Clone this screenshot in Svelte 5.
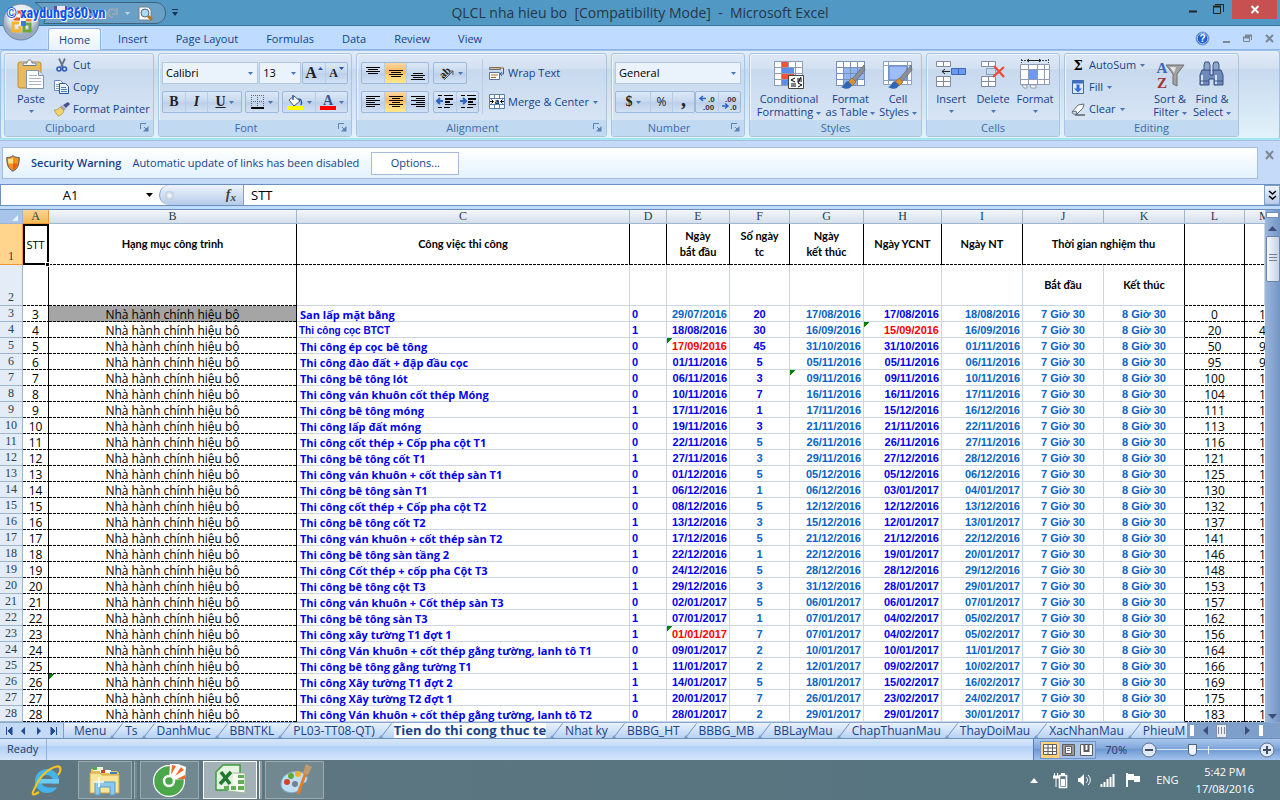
<script>
  const menuTabs = ['Home', 'Insert', 'Page Layout', 'Formulas', 'Data', 'Review', 'View'];
  const columns = [
    ['A', 26], ['B', 248], ['C', 333], ['D', 37], ['E', 63], ['F', 60], ['G', 74],
    ['H', 78], ['I', 81], ['J', 81], ['K', 81], ['L', 60], ['M', 0]
  ];
  // work, flag, start, days, end, YCNT, NT, total, next
  const source = `San lấp mặt bằng|0|29/07/2016|20|17/08/2016|17/08/2016|18/08/2016|0|1
Thi công cọc BTCT|1|18/08/2016|30|16/09/2016|15/09/2016|16/09/2016|20|4
Thi công ép cọc bê tông|0|17/09/2016|45|31/10/2016|31/10/2016|01/11/2016|50|9
Thi công đào đất + đập đầu cọc|0|01/11/2016|5|05/11/2016|05/11/2016|06/11/2016|95|9
Thi công bê tông lót|0|06/11/2016|3|09/11/2016|09/11/2016|10/11/2016|100|1
Thi công ván khuôn cốt thép Móng|0|10/11/2016|7|16/11/2016|16/11/2016|17/11/2016|104|1
Thi công bê tông móng|1|17/11/2016|1|17/11/2016|15/12/2016|16/12/2016|111|1
Thi công lấp đất móng|0|19/11/2016|3|21/11/2016|21/11/2016|22/11/2016|113|1
Thi công cốt thép + Cốp pha cột T1|0|22/11/2016|5|26/11/2016|26/11/2016|27/11/2016|116|1
Thi công bê tông cốt T1|1|27/11/2016|3|29/11/2016|27/12/2016|28/12/2016|121|1
Thi công ván khuôn + cốt thép sàn T1|0|01/12/2016|5|05/12/2016|05/12/2016|06/12/2016|125|1
Thi công bê tông sàn T1|1|06/12/2016|1|06/12/2016|03/01/2017|04/01/2017|130|1
Thi công cốt thép + Cốp pha cột T2|0|08/12/2016|5|12/12/2016|12/12/2016|13/12/2016|132|1
Thi công bê tông cốt T2|1|13/12/2016|3|15/12/2016|12/01/2017|13/01/2017|137|1
Thi công ván khuôn + cốt thép sàn T2|0|17/12/2016|5|21/12/2016|21/12/2016|22/12/2016|141|1
Thi công bê tông sàn tầng 2|1|22/12/2016|1|22/12/2016|19/01/2017|20/01/2017|146|1
Thi công Cốt thép + cốp pha Cột T3|0|24/12/2016|5|28/12/2016|28/12/2016|29/12/2016|148|1
Thi công bê tông cột T3|1|29/12/2016|3|31/12/2016|28/01/2017|29/01/2017|153|1
Thi công ván khuôn + Cốt thép sàn T3|0|02/01/2017|5|06/01/2017|06/01/2017|07/01/2017|157|1
Thi công bê tông sàn T3|1|07/01/2017|1|07/01/2017|04/02/2017|05/02/2017|162|1
Thi công xây tường T1 đợt 1|1|01/01/2017|7|07/01/2017|04/02/2017|05/02/2017|156|1
Thi công Ván khuôn + cốt thép gằng tường, lanh tô T1|0|09/01/2017|2|10/01/2017|10/01/2017|11/01/2017|164|1
Thi công bê tông gằng tường T1|1|11/01/2017|2|12/01/2017|09/02/2017|10/02/2017|166|1
Thi công Xây tường T1 đợt 2|1|14/01/2017|5|18/01/2017|15/02/2017|16/02/2017|169|1
Thi công Xây tường T2 đợt 1|1|20/01/2017|7|26/01/2017|23/02/2017|24/02/2017|175|1
Thi công Ván khuôn + cốt thép gằng tường, lanh tô T2|0|28/01/2017|2|29/01/2017|29/01/2017|30/01/2017|183|1`;
  const rows = source.split('\n').map((line, i) => [i + 3, ...line.split('|')]);
  const sheets = ['Menu', 'Ts', 'DanhMuc', 'BBNTKL', 'PL03-TT08-QT)', 'Tien do thi cong thuc te', 'Nhat ky', 'BBBG_HT', 'BBBG_MB', 'BBLayMau', 'ChapThuanMau', 'ThayDoiMau', 'XacNhanMau', 'PhieuM'];
  let activeTab = $state('Home');
  let activeSheet = $state('Tien do thi cong thuc te');
  let zoom = $state(33);
  let cellRef = $state('A1');
  let formula = $state('STT');
</script>

{#snippet arrow()}<svg class="arr" width="5" height="3" viewBox="0 0 5 3"><path d="M0 0h5L2.500 3z" fill="#4a76b8" /></svg>{/snippet}
{#snippet launcher(name)}
  <button class="launch" aria-label={`${name} settings`}><svg width="9" height="9" viewBox="0 0 9 9"><path d="M.5 6V.5H6M4 4l3 3" fill="none" stroke="#5a82b5" /><path d="M8.500 3v5.500H3z" fill="#5a82b5" /></svg></button>
{/snippet}
{#snippet lines(list)}
  <svg width="16" height="16" viewBox="0 0 16 16" shape-rendering="crispEdges">
    {#each list as l}<rect x={l[0]} y={l[1]} width={l[2]} height="1" fill="#000" />{/each}
  </svg>
{/snippet}
{#snippet brush()}
  <path d="M29 5 17 19l3 3L30 10z" fill="#8b8f98" stroke="#5c606a" stroke-width=".6" />
  <path d="m17 18 4 4-4 4-4-4z" fill="#d9902f" stroke="#8a5a1c" stroke-width=".6" />
  <path d="M13 21c-4 1-3 5-7 6 5 3 10 2 11-2z" fill="#2f66b8" />
{/snippet}
{#snippet gridLines(color)}
  <rect x="1.500" y="1.500" width="28" height="24" fill="#fff" stroke={color} />
  <path d="M1 7.500h28M1 13.500h28M1 19.500h28M8.500 1v24M15.500 1v24M22.500 1v24" stroke={color} fill="none" />
{/snippet}

<div class="window">
  <header class="title">
    <h1>QLCL nha hieu bo &nbsp;[Compatibility Mode]&nbsp; - &nbsp;Microsoft Excel</h1>
    <div class="quick">
      <svg width="152" height="26" viewBox="0 0 152 26">
        <path d="M7 2.500h120c14 0 14 21 0 21H16C19 13 13 6 7 2.500z" fill="#6aa0c6" stroke="#3f6179" />
        <path d="M26 6h13v13H26z" fill="#5b50a8" /><path d="M29 6h8v5h-8zM29 14h7v5h-7z" fill="#e8e8f8" />
        <path d="M54 14c-1-6 8-7 9-1M54 8v6h5" fill="none" stroke="#2b56b5" stroke-width="2" />
        <path d="M89 14c1-5-7-7-9-1 0 3 3 4 5 4M89 8v6h-5" fill="none" stroke="#95a9bd" stroke-width="2" />
        <path d="M97 12h5l-2.500 3z" fill="#c5d5e3" />
        <path d="M111 7h9l3 3v10h-12z" fill="#fff" stroke="#73808e" /><circle cx="117" cy="13" r="4" fill="#a9dafa" stroke="#59656f" /><path d="m120 16 4 4" stroke="#b8731b" stroke-width="3" />
        <path d="M144 9.500h6" stroke="#1d3556" /><path d="M144 12h6l-3 4z" fill="#1d3556" />
      </svg>
    </div>
    <button class="orb" aria-label="Office button">
      <svg width="38" height="38" viewBox="0 0 38 38">
        <defs><radialGradient id="orb" cx=".5" cy=".35"><stop offset="0" stop-color="#fff" /><stop offset=".65" stop-color="#e4e8ef" /><stop offset="1" stop-color="#9aaac0" /></radialGradient></defs>
        <circle cx="19" cy="19" r="18" fill="url(#orb)" stroke="#6a86a5" />
        <g fill="none" stroke-width="3">
          <path d="M18 16h-5v-4l3-3h4v5" stroke="#e8501f" /><path d="M22 16v-6h6v7h-4" stroke="#f0822c" />
          <path d="M17 20h-6v8h7v-5" stroke="#f6b62b" /><path d="M22 22v6h6v-7h-5" stroke="#6ca63a" />
        </g>
        <path d="M19 18h5v5h-5z" fill="#3b7bd0" />
      </svg>
    </button>
    <span class="mark">© xaydung360.vn</span>
    <div class="winctl">
      <button aria-label="Minimize"><svg width="30" height="19"><path d="M11 11.500h8" stroke="#222" stroke-width="2" /></svg></button>
      <button aria-label="Restore"><svg width="30" height="19"><path d="M9.500 6.500h7v7h-7zM11 4.500h8.500V12" fill="none" stroke="#222" /><path d="M9 6.500h8" stroke="#222" stroke-width="2" /></svg></button>
      <button class="close" aria-label="Close"><svg width="45" height="19"><path d="m19.500 6 7 7m0-7-7 7" stroke="#fff" stroke-width="2" /></svg></button>
    </div>
  </header>

  <nav class="tabs">
    {#each menuTabs as t}
      <button class:on={t === activeTab} onclick={() => (activeTab = t)}>{t}</button>
    {/each}
    <div class="docctl">
      <button aria-label="Help"><svg width="15" height="15" viewBox="0 0 15 15"><circle cx="7.500" cy="7.500" r="6.500" fill="#1f5fd2" stroke="#7f9cc8" /><circle cx="7.500" cy="7.500" r="5.300" fill="none" stroke="#cfe2ff" stroke-width=".8" /><text x="7.500" y="11" text-anchor="middle" class="q">?</text></svg></button>
      <button aria-label="Minimize document"><svg width="9" height="15"><path d="M1 11h7" stroke="#7d8794" stroke-width="2" /></svg></button>
      <button aria-label="Restore document"><svg width="10" height="15"><path d="M.5 6.500h6v4h-6zM2.500 4.500h6V9" fill="none" stroke="#7d8794" /><path d="M0 6.500h7M2 4.500h7" stroke="#7d8794" stroke-width="2" /></svg></button>
      <button aria-label="Close document"><svg width="10" height="15"><path d="m1 4 7 7m0-7-7 7" stroke="#7d8794" stroke-width="2" /></svg></button>
    </div>
  </nav>

  <div class="ribbon">
    <section class="grp clip">
      <div class="body">
        <button class="big paste">
          <svg width="28" height="32" viewBox="0 0 28 32"><rect x="1" y="3" width="23" height="26" rx="2" fill="#e9b95b" stroke="#c08c34" /><path d="M5 3h15v4H5z" fill="#c9ccd2" /><path d="M6 6.500V4h4c0-4 5-4 5 0h4v2.500z" fill="#f4f5f7" stroke="#70767f" /><path d="M9.500 11.500h12l5 5v13h-17z" fill="#fff" stroke="#7e93ad" /><path d="M12 16.500h8M12 19.500h12M12 22.500h12M12 25.500h12" stroke="#a9b4c5" /><path d="M21.500 11.500v5h5" fill="#dbe4f0" stroke="#7e93ad" /></svg>
          <span>Paste</span>{@render arrow()}
        </button>
        <div class="col">
          <button class="sm"><svg width="16" height="16" viewBox="0 0 16 16"><path d="M5 1.500 9 10M11 1.500 7 10" stroke="#66758c" stroke-width="1.800" /><circle cx="5" cy="12" r="2" fill="none" stroke="#2d5bb4" stroke-width="1.600" /><circle cx="10.500" cy="12" r="2" fill="none" stroke="#2d5bb4" stroke-width="1.600" /></svg>Cut</button>
          <button class="sm"><svg width="16" height="16" viewBox="0 0 16 16"><path d="M.5 1.500h6l3 3v7h-9z" fill="#fff" stroke="#6886b4" /><path d="M2 5.500h4M2 7.500h4M2 9.500h4" stroke="#7c9ad0" /><path d="M5.500 4.500h6l3 3v7h-9z" fill="#eaf1fc" stroke="#31559c" /><path d="M7 8.500h5M7 10.500h6M7 12.500h6" stroke="#4e78bf" /></svg>Copy</button>
          <button class="sm"><svg width="16" height="16" viewBox="0 0 16 16"><path d="M14 1 16 3l-4 4-3-3z" fill="#4c4f8c" /><path d="m8 4 4 4-2 1.500L6 6z" fill="#a4a8b8" /><path d="M6 6l4 4c-1 3-4 5-6 5L0 9c3 0 5-1 6-3z" fill="#f1d36e" stroke="#a8842c" stroke-width=".6" /></svg>Format Painter</button>
        </div>
      </div>
      <footer>Clipboard{@render launcher('Clipboard')}</footer>
    </section>

    <section class="grp font">
      <div class="body stack">
        <div class="row">
          <label class="pick w97"><select aria-label="Font name"><option>Calibri</option></select>{@render arrow()}</label>
          <label class="pick w42"><select aria-label="Font size"><option>13</option></select>{@render arrow()}</label>
          <div class="set push">
            <button class="b22" aria-label="Grow font"><b class="ser s16">A</b><svg width="5" height="12"><path d="M0 4h5L2.500 1z" fill="#2b52a5" /></svg></button>
            <button class="b22" aria-label="Shrink font"><b class="ser s12">A</b><svg width="5" height="12"><path d="M0 1h5L2.500 4z" fill="#2b52a5" /></svg></button>
          </div>
        </div>
        <div class="row">
          <div class="set">
            <button class="b22" aria-label="Bold"><b class="ser s14">B</b></button>
            <button class="b22" aria-label="Italic"><b class="ser s14"><i>I</i></b></button>
            <button class="b34" aria-label="Underline"><b class="ser s14"><u>U</u></b>{@render arrow()}</button>
          </div>
          <div class="set push"><button class="b32" aria-label="Borders"><svg width="14" height="14"><path d="M.5 0v12M6.500 0v12M12.500 0v12M0 .5h13M0 6.500h13" stroke="#666" stroke-dasharray="1 1" /><path d="M0 13h13" stroke="#000" stroke-width="2" /></svg>{@render arrow()}</button></div>
          <div class="set push">
            <button class="b32" aria-label="Fill color"><svg width="18" height="16"><path d="m3 6 5-4 6 5-6 5z" fill="#fff" stroke="#44546a" /><path d="M7 1v5M12 5c4 0 4 3 3 6" fill="none" stroke="#2c5aa8" stroke-width="1.500" /><path d="M1 12h16v4H1z" fill="#ff0" /></svg>{@render arrow()}</button>
            <button class="b32" aria-label="Font color"><svg width="16" height="16"><text x="8" y="11" text-anchor="middle" class="fc">A</text><path d="M0 12h16v4H0z" fill="red" /></svg>{@render arrow()}</button>
          </div>
        </div>
      </div>
      <footer>Font{@render launcher('Font')}</footer>
    </section>

    <section class="grp align">
      <div class="body">
        <div class="stack">
          <div class="row">
            <div class="set">
              <button class="b22" aria-label="Top align">{@render lines([[1, 2, 14], [3, 4, 10], [1, 6, 14], [3, 8, 10]])}</button>
              <button class="b22 hot" aria-label="Middle align">{@render lines([[1, 5, 14], [3, 7, 10], [1, 9, 14], [3, 11, 10]])}</button>
              <button class="b22" aria-label="Bottom align">{@render lines([[3, 8, 10], [1, 10, 14], [3, 12, 10], [1, 14, 14]])}</button>
            </div>
            <div class="set push"><button class="b32" aria-label="Orientation"><svg width="17" height="16"><text x="1" y="12" class="ori" transform="rotate(-45 6 8)">ab</text><path d="M6 15 15 6M15 10V6h-4" fill="none" stroke="#555" /></svg>{@render arrow()}</button></div>
          </div>
          <div class="row">
            <div class="set">
              <button class="b22" aria-label="Align left">{@render lines([[1, 2, 14], [1, 4, 9], [1, 6, 14], [1, 8, 9], [1, 10, 14], [1, 12, 9]])}</button>
              <button class="b22 hot" aria-label="Center">{@render lines([[1, 2, 14], [4, 4, 8], [1, 6, 14], [4, 8, 8], [1, 10, 14], [4, 12, 8]])}</button>
              <button class="b22" aria-label="Align right">{@render lines([[1, 2, 14], [6, 4, 9], [1, 6, 14], [6, 8, 9], [1, 10, 14], [6, 12, 9]])}</button>
            </div>
            <div class="set push">
              <button class="b22" aria-label="Decrease indent"><svg width="16" height="16"><path d="M1 1.500h4M7 1.500h9M8 4.500h8M8 7.500h5M8 10.500h8M1 13.500h4M7 13.500h6" stroke="#000" /><path d="M8 5.500h8M8 8.500h5" stroke="#000" /><path d="M0 7h6M3 4 0 7l3 3" fill="none" stroke="#2b63c6" stroke-width="2" /></svg></button>
              <button class="b22" aria-label="Increase indent"><svg width="16" height="16"><path d="M1 1.500h4M7 1.500h9M8 4.500h8M8 7.500h5M8 10.500h8M1 13.500h4M7 13.500h6" stroke="#000" /><path d="M8 5.500h8M8 8.500h5" stroke="#000" /><path d="M0 7h6M3 4l3 3-3 3" fill="none" stroke="#2b63c6" stroke-width="2" /></svg></button>
            </div>
          </div>
        </div>
        <div class="stack wrap">
          <button class="sm"><svg width="16" height="16"><path d="M.5 2.500h11v2H.5zM.5 7.500h10v7H.5z" fill="#fff" stroke="#5a7396" /><path d="M1 3h14M2 10h7M2 12.500h5" stroke="#b06a20" /><path d="M14.500 3v6h-3M13 7l-2 2 2 2" fill="none" stroke="#44608c" /></svg>Wrap Text</button>
          <button class="sm"><svg width="16" height="16"><path d="M.5.500h15v14H.5zM.5 4.500h15M.5 10.500h15M5.500.500v4M10.500.500v4M5.500 10.500v4M10.500 10.500v4" fill="#fff" stroke="#5a7fb5" /><path d="M1 7.500h3M2.500 5.500 4.500 7.500 2.500 9.500M15 7.500h-3M13.500 5.500l-2 2 2 2" fill="none" stroke="#000" /><text x="8" y="10" text-anchor="middle" class="ma">a</text></svg>Merge &amp; Center {@render arrow()}</button>
        </div>
      </div>
      <footer>Alignment{@render launcher('Alignment')}</footer>
    </section>

    <section class="grp num">
      <div class="body stack">
        <div class="row"><label class="pick full"><select aria-label="Number format"><option>General</option></select>{@render arrow()}</label></div>
        <div class="row">
          <div class="set">
            <button class="b34" aria-label="Currency"><b class="ser s14">$</b>{@render arrow()}</button>
            <button class="b22" aria-label="Percent"><span class="pc">%</span></button>
            <button class="b22" aria-label="Comma"><b class="ser s20 up">,</b></button>
          </div>
          <div class="set push">
            <button class="b22" aria-label="Increase decimal"><svg width="17" height="15"><path d="M1 3.500h6M4 1 1 3.500 4 6" fill="none" stroke="#2b63c6" stroke-width="1.500" /><text x="9" y="7" class="dec">.0</text><text x="4" y="15" class="dec">.00</text></svg></button>
            <button class="b22" aria-label="Decrease decimal"><svg width="17" height="15"><text x="4" y="7" class="dec">.00</text><path d="M1 11h6M4 8.500 7 11l-3 2.500" fill="none" stroke="#2b63c6" stroke-width="1.500" /><text x="9" y="15" class="dec">.0</text></svg></button>
          </div>
        </div>
      </div>
      <footer>Number{@render launcher('Number')}</footer>
    </section>

    <section class="grp styles">
      <div class="body">
        <button class="big g70"><svg width="32" height="30" viewBox="0 0 32 30">{@render gridLines('#8f9bb5')}<path d="M9 2h6v5H9zM9 14h12v5H9z" fill="#f4523b" /><path d="M9 8h12v5H9zM9 20h6v5H9z" fill="#5d8cf0" /><path d="M15.500 15.500h15v13h-15z" fill="#fff" stroke="#444" /><path d="m22 18-4 2 4 2M18 24h5M18 26h5M24 19h5M24 21h5M28 17l-3 6M25 23l4 2-4 2" fill="none" stroke="#000" /></svg>
          <span>Conditional<br />Formatting {@render arrow()}</span></button>
        <button class="big g53"><svg width="32" height="30" viewBox="0 0 32 30">{@render gridLines('#7890b8')}<path d="M9 8h6v5H9zM16 8h6v5h-6zM23 8h6v5h-6zM9 14h6v5H9zM16 14h6v5h-6zM23 14h6v5h-6zM9 20h6v5H9zM16 20h6v5h-6z" fill="#92b4f5" />{@render brush()}</svg>
          <span>Format<br />as Table {@render arrow()}</span></button>
        <button class="big g44"><svg width="32" height="30" viewBox="0 0 32 30"><path d="M1.500 1.500h28v23h-28zM1 5.500h28M1 20.500h28M6.500 1v23M25.500 1v23" fill="#fff" stroke="#8fa0ba" /><path d="M7 6h18v14H7z" fill="#9dbcf8" stroke="#5d83cc" />{@render brush()}</svg>
          <span>Cell<br />Styles {@render arrow()}</span></button>
      </div>
      <footer>Styles</footer>
    </section>

    <section class="grp cells">
      <div class="body">
        <button class="big g42"><svg width="32" height="30" viewBox="0 0 32 30"><path d="M1.500 1.500h14v5h-14zM8.500 1.500v5M1.500 16.500h14v10h-14zM1.500 21.500h14M8.500 16.500v10" fill="#fff" stroke="#7f8ba3" /><path d="M16.500 8.500h14v6h-14z" fill="#6d9af0" stroke="#3f66b4" /><path d="M23.500 9v5" stroke="#3f66b4" /><path d="M7 11.500h8M10 9l-3 2.500 3 2.500" fill="none" stroke="#222" /></svg><span>Insert</span>{@render arrow()}</button>
        <button class="big g42"><svg width="32" height="30" viewBox="0 0 32 30"><path d="M4.500 1.500h14v5h-14zM11.500 1.500v5M4.500 16.500h14v10h-14zM4.500 21.500h14M11.500 16.500v10" fill="#fff" stroke="#7f8ba3" /><path d="M9.500 8.500h9v6h-9z" fill="none" stroke="#3f66b4" stroke-dasharray="1 1" /><path d="m17 6 10 11M27 7 16 17" stroke="#f04a32" stroke-width="2.200" /></svg><span>Delete</span>{@render arrow()}</button>
        <button class="big g42"><svg width="32" height="32" viewBox="0 0 32 32"><path d="M2 1.500h28M2.500 0v4M29.500 0v4" stroke="#444" stroke-dasharray="2 1" /><path d="M8 1.500h14M10 0 8 1.500 10 3M20 0l2 1.500L20 3" fill="none" stroke="#222" /><path d="M1.500 5.500h29v20h-29zM1.500 10.500h29M1.500 20.500h29M9.500 5.500v20M18.500 5.500v20M25.500 5.500v20" fill="#fff" stroke="#8f9bb5" /><path d="M10 11h8v9h-8z" fill="#6d9af0" /><path d="M3 26h5v3H5zM11 26h6v3h-5z" fill="#fff" stroke="#8f9bb5" /></svg><span>Format</span>{@render arrow()}</button>
      </div>
      <footer>Cells</footer>
    </section>

    <section class="grp edit">
      <div class="body">
        <div class="col">
          <button class="sm"><svg width="14" height="16"><text x="7" y="13" text-anchor="middle" class="sum">Σ</text></svg>AutoSum {@render arrow()}</button>
          <button class="sm"><svg width="14" height="16"><path d="M1.500 1.500h11v13h-11z" fill="#dce9fb" stroke="#47689c" /><path d="M1.500 1.500h11v3h-11z" fill="#3f6ec2" /><path d="M5.500 5.500h3v4H11l-4 4-4-4h2.500z" fill="#2f6ee0" /></svg>Fill {@render arrow()}</button>
          <button class="sm"><svg width="14" height="16"><path d="m1 11 6-7 6-1-1 4-6 6H2z" fill="#fff" stroke="#66707f" /><path d="m1 11 4-1 1 3" fill="#cfd6e2" stroke="#66707f" /><path d="M4 14h10" stroke="#222" /></svg>Clear {@render arrow()}</button>
        </div>
        <button class="big g42"><svg width="32" height="30" viewBox="0 0 32 30"><path d="M12 5h18l-7 9v12l-4-2V14z" fill="#a3a3a3" stroke="#6e6e6e" /><path d="M16 7h6l-2 6z" fill="#e3e3e3" /><text x="8" y="13" text-anchor="middle" class="az" fill="#3a65b4">A</text><text x="8" y="28" text-anchor="middle" class="az" fill="#a03232">Z</text></svg><span>Sort &amp;<br />Filter {@render arrow()}</span></button>
        <button class="big g42"><svg width="32" height="30" viewBox="0 0 32 30"><path d="M9 2h4l1 3v6H8V5zM18 2h4l1 3v6h-6V5z" fill="#8ea5cc" stroke="#3c5484" /><path d="M6 10h8v5h3v-5h8l2 5v10h-9v-6h-5v6H4V15z" fill="#6f8bbb" stroke="#344c7c" /><path d="M6 15v9M20 15v9" stroke="#d6e2f6" stroke-width="2" /><path d="M4 21h9M18 21h9" stroke="#3c5484" /></svg><span>Find &amp;<br />Select {@render arrow()}</span></button>
      </div>
      <footer>Editing</footer>
    </section>
  </div>

  <div class="message">
    <div class="msg">
      <svg width="14" height="17" viewBox="0 0 14 17"><path d="M7 .7C9 2.300 11 2.500 13.200 2.500c0 7-1.200 11-6.200 13.700C2 13.500.8 9.500.8 2.500 3 2.500 5 2.300 7 .7z" fill="#f7901e" stroke="#4d5560" /><path d="M7 2.500v6H2.500C2 7 2 5.500 2 4c2 0 3.500-.5 5-1.500z" fill="#ffe08a" /><path d="M7 8.500h4.500C11 11.500 9.500 13.500 7 15z" fill="#ee5a12" /></svg>
      <strong>Security Warning</strong><span>Automatic update of links has been disabled</span>
      <button>Options...</button>
    </div>
    <button class="x" aria-label="Close message bar"><svg width="10" height="10"><path d="m1 1 7 8m0-8-7 8" stroke="#7d8794" stroke-width="2" /></svg></button>
  </div>

  <div class="fbar">
    <div class="name"><input aria-label="Name box" bind:value={cellRef} /><svg width="7" height="4"><path d="M0 0h7L3.500 4z" /></svg></div>
    <div class="fx"><i class="dot"></i><button aria-label="Insert function"><i>f</i><small>x</small></button></div>
    <input class="formula" aria-label="Formula" bind:value={formula} />
    <button class="exp" aria-label="Expand formula bar"><svg width="9" height="11"><path d="m1 1 3.500 3L8 1M1 6l3.500 3L8 6" fill="none" stroke="#000" stroke-width="1.500" /></svg></button>
  </div>

  <main>
    <div class="sheet">
      <table>
        <colgroup><col style="width:23px" />{#each columns as c}<col style={c[1] ? `width:${c[1]}px` : ''} />{/each}</colgroup>
        <thead><tr><th class="corner"><svg width="7" height="7"><path d="M6 0v6H0z" fill="#e9f1fc" /></svg></th>{#each columns as c, i}<th class:sel={i === 0} class:last={i === 12}>{c[0]}</th>{/each}</tr></thead>
        <tbody>
          <tr class="h1">
            <th class="rh sel">1</th>
            <td class="k active">STT<i class="knob"></i></td><td class="k d">Hạng mục công trình</td><td class="k d">Công việc thi công</td><td class="k d"></td>
            <td class="k d">Ngày<br />bắt đầu</td><td class="k d">Số ngày<br />tc</td><td class="k d">Ngày<br />kết thúc</td><td class="k d">Ngày YCNT</td><td class="k d">Ngày NT</td>
            <td class="k d" colspan="2">Thời gian nghiệm thu</td><td class="k d"></td><td class="d"></td>
          </tr>
          <tr class="h2">
            <th class="rh">2</th><td class="k d"></td><td class="k d"></td><td></td><td></td><td></td><td></td><td></td><td></td><td></td>
            <td>Bắt đầu</td><td class="k">Kết thúc</td><td class="k d"></td><td class="d"></td>
          </tr>
          {#each rows as r}
            <tr>
              <th class="rh">{r[0]}</th>
              <td class="k d n">{r[0]}</td>
              <td class="k d n" class:gray={r[0] === 3} class:flag={r[0] === 26}>Nhà hành chính hiệu bộ</td>
              <td class="work" class:thin={r[0] === 4}>{r[1]}</td>
              <td class="ar l">{r[2]}</td>
              <td class="ar r" class:lt={r[0] === 3} class:red={r[0] === 5 || r[0] === 23} class:flag={r[0] === 5 || r[0] === 23}>{r[3]}</td>
              <td class="ar" class:lt={r[0] > 10}>{r[4]}</td>
              <td class="ar r lt" class:flag={r[0] === 7}>{r[5]}</td>
              <td class="ar r" class:red={r[0] === 4} class:flag={r[0] === 4}>{r[6]}</td>
              <td class="ar r lt">{r[7]}</td>
              <td class="ar lt">7 Giờ 30</td>
              <td class="ar lt k">8 Giờ 30</td>
              <td class="k d n">{r[8]}</td>
              <td class="d n last">{r[9]}</td>
            </tr>
          {/each}
        </tbody>
      </table>
    </div>
    <div class="vscroll">
      <i class="split"></i>
      <svg width="9" height="5"><path d="M0 5h9L4.500 0z" fill="#3d4f78" /></svg>
      <i class="thumb"></i>
      <svg class="end" width="9" height="5"><path d="M0 0h9L4.500 5z" fill="#3d4f78" /></svg>
    </div>
  </main>

  <div class="sheets">
    <div class="nav">
      <button aria-label="First sheet"><svg width="8" height="8"><path d="M1.500 0v8M7 0v8L3 4z" fill="#1f4a94" stroke="#1f4a94" stroke-width="1" /></svg></button>
      <button aria-label="Previous sheet"><svg width="8" height="8"><path d="M5 0v8L1 4z" fill="#1f4a94" /></svg></button>
      <button aria-label="Next sheet"><svg width="8" height="8"><path d="M2 0v8l4-4z" fill="#1f4a94" /></svg></button>
      <button aria-label="Last sheet"><svg width="8" height="8"><path d="M6.500 0v8M1 0v8l4-4z" fill="#1f4a94" stroke="#1f4a94" stroke-width="1" /></svg></button>
    </div>
    <div class="strip">
      {#each sheets as s}
        <button class:on={s === activeSheet} onclick={() => (activeSheet = s)}>{s}</button>
        <svg class="slash" width="14" height="16"><path d="M0 15.500h2L13.500.500" fill="none" stroke="#6f94c6" /><path d="m0 16 3-4 3 4z" fill="#7b9ccb" /></svg>
      {/each}
    </div>
    <div class="hscroll">
      <i class="grip"></i><svg width="5" height="9"><path d="M5 0v9L0 4.500z" fill="#3d4f78" /></svg><i class="hthumb"></i><svg class="end" width="5" height="9"><path d="M0 0v9l5-4.500z" fill="#3d4f78" /></svg><i class="grip"></i>
    </div>
  </div>

  <div class="status">
    <span class="ready">Ready</span>
    <div class="views">
      <div class="modes">
        <button class="hot" aria-label="Normal view"><svg width="14" height="12"><path d="M.5.500h13v10H.5zM0 4h13M0 7.500h13M5 0v11M9.500 0v11" fill="#fff" stroke="#5d5d5d" /></svg></button>
        <button aria-label="Page layout view"><svg width="13" height="12"><path d="M.5.500h12v11H.5z" fill="#999" stroke="#5d5d5d" /><path d="M3.500 2.500h6v7h-6z" fill="#fff" stroke="#5d5d5d" /><path d="M5 4.500h3M5 6.500h3" stroke="#777" /></svg></button>
        <button aria-label="Page break view"><svg width="13" height="12"><path d="M.5.500h12v11H.5z" fill="#fff" stroke="#5d5d5d" /><path d="M4.500 0v7h4V0" fill="none" stroke="#5d5d5d" stroke-width="2" /></svg></button>
      </div>
      <span class="pct">70%</span>
      <button aria-label="Zoom out"><svg width="16" height="16"><circle cx="8" cy="8" r="7" fill="#dfe9f7" stroke="#5b6f8c" /><path d="M4 8h8" stroke="#444e5e" stroke-width="2" /></svg></button>
      <input type="range" aria-label="Zoom" min="0" max="100" bind:value={zoom} />
      <button aria-label="Zoom in"><svg width="16" height="16"><circle cx="8" cy="8" r="7" fill="#dfe9f7" stroke="#5b6f8c" /><path d="M4 8h8M8 4v8" stroke="#444e5e" stroke-width="2" /></svg></button>
    </div>
  </div>

  <div class="task">
    <button class="plain" aria-label="Internet Explorer"><svg width="32" height="32" viewBox="0 0 32 32"><circle cx="17" cy="17" r="9" fill="none" stroke="#45b4ea" stroke-width="6" /><path d="M17 19.500h13v4H17z" fill="#5d7680" /><path d="M9 15h20v4.500H9z" fill="#6ccbf5" /><path d="M6 22c-6 10-3 10 3 6M4.500 25C9 12 19 4 27 2.500c5-.5 4 5 1 8.500" fill="none" stroke="#f6c321" stroke-width="2.200" /></svg></button>
    <button class="app two" aria-label="File Explorer"><svg width="34" height="32" viewBox="0 0 34 32"><path d="M3 5h5l1 2h20l2 2v16H3z" fill="#e9c25c" /><path d="M5 3h10v4H5z" fill="#f7f3dd" /><path d="M5 3h4v3H5z" fill="#4dae50" /><path d="M12 6h11v3H12z" fill="#fff" /><path d="M13 6h4v3h-4z" fill="#d7402f" /><path d="M22 8h7v2h-7z" fill="#3c82c8" /><path d="M2 9h10l2 2h17v18H2z" fill="#fbe59a" stroke="#cfa543" /><path d="M7 31V18h20v13h-5v-8H12v8z" fill="#8cc7ec" stroke="#579ccb" /><path d="M11 13v10M6 18h10" stroke="#fff" stroke-width="1.500" /></svg></button>
    <button class="app" aria-label="Browser"><svg width="34" height="32" viewBox="0 0 34 32"><circle cx="16" cy="17" r="10.500" fill="none" stroke="#fff" stroke-width="11" /><circle cx="16" cy="17" r="10.500" fill="none" stroke="#4aa84a" stroke-width="8.500" /><path d="M16 16 17 0h8l8 3-1 12z" fill="#fff" /><path d="m18 11 1-10 4 1zM22 12l6-9 3 3zM24 15l8-4v4z" fill="#f26a2a" /><circle cx="16" cy="17" r="4.500" fill="#4aa84a" stroke="#fff" stroke-width="1.500" /></svg></button>
    <button class="app two lit" aria-label="Excel"><svg width="32" height="32" viewBox="0 0 32 32"><path d="M9 1h17v25H2V8z" fill="#e9f5e4" stroke="#3f9b3a" stroke-width="1.500" /><path d="M14 9h17v20l-17-2z" fill="#f5faf2" stroke="#9db793" /><path d="M24 11h6v3h-6zM24 16h6v4h-6zM24 22h6v4h-6zM17 22h5v4h-5zM10 22h5v4h-5z" fill="#66ad58" /><path d="M4 7h15v14H4z" fill="#dff0d9" /><path d="m7 8 9 12M17 8 6 20" stroke="#1f7a30" stroke-width="3.500" /></svg></button>
    <button class="app" aria-label="Paint"><svg width="34" height="32" viewBox="0 0 34 32"><path d="M3 20C3 10 16 5 25 9c6 3 5 9 1 10s-3 3-4 6c-4 6-19 5-19-5z" fill="#bfe0f3" stroke="#7fa9c5" /><circle cx="9" cy="18" r="3" fill="#d5432f" /><circle cx="13" cy="12" r="3" fill="#61a83c" /><circle cx="20" cy="10" r="3" fill="#f3b12a" /><circle cx="17" cy="20" r="3" fill="#6a8494" /><path d="m28 8-8 22" stroke="#e17c28" stroke-width="3" /><path d="m25 9 3-9 6 3-4 8z" fill="#c19a6c" /></svg></button>
    <div class="tray">
      <svg width="8" height="5"><path d="M0 5h8L4 0z" fill="#fff" /></svg>
      <svg width="16" height="16"><path d="M7.500 3.500h7v12h-7z" fill="none" stroke="#fff" stroke-width="1.600" /><path d="M9 1h4v2H9zM9 7h4v7H9z" fill="#fff" /><path d="M2.500 1v3M5.500 1v3M4 6v9" stroke="#fff" /><path d="M1 3.500h6v3H1z" fill="#fff" /></svg>
      <svg width="14" height="14"><path d="M1 5h2l4-4v12L3 9H1z" fill="#fff" /><path d="M9 4c2 2 2 4 0 6M11 2c3 3 3 7 0 10" fill="none" stroke="#fff" /></svg>
      <svg width="16" height="14"><path d="M1.500 14v-3M4.500 14v-5M7.500 14V6M10.500 14V4M13.500 14V1" stroke="#fff" stroke-width="2" /></svg>
      <svg width="16" height="16"><path d="M2 1v14" stroke="#fff" stroke-width="2" /><path d="M3 2h6v2h6v6H9V8H3z" fill="#fff" /></svg>
      <span>ENG</span>
      <time>5:42 PM<br />17/08/2016</time>
    </div>
  </div>
</div>

<style>
  :global(body) { margin: 0; }
  * { box-sizing: border-box; }
  .window { display: flex; flex-direction: column; height: 100vh; overflow: hidden; font: 11px/16px "Open Sans", "Noto Sans", sans-serif; color: #15428b; background: #bfdbff; }
  button, input, select { font: inherit; color: inherit; border: 0; padding: 0; margin: 0; background: none; border-radius: 0; outline: 0; }
  button { display: flex; align-items: center; justify-content: center; white-space: nowrap; flex: none; }
  svg { display: block; flex: none; overflow: visible; }

  .title { position: relative; height: 26px; flex: none; background: #5199c4; border-bottom: 1px solid #3d7399; display: flex; align-items: center; justify-content: center; z-index: 2; }
  h1 { margin: 0; font-size: 14px; line-height: 24px; font-weight: 400; color: #263645; white-space: nowrap; }
  .quick { position: absolute; left: 28px; top: 0; }
  .orb { position: absolute; left: 2px; top: 3px; }
  .mark { position: absolute; left: 6px; top: 4px; font: bold 14px/18px "Liberation Sans Narrow", "Roboto Condensed", "DejaVu Sans Condensed", sans-serif; color: #0a50ee; text-shadow: 1px 0 #fff, 0 1px #fff, 1px 1px #fff; white-space: nowrap; }
  .winctl { position: absolute; right: 3px; top: 0; display: flex; }
  .winctl button:nth-child(1), .winctl button:nth-child(2) { width: 26px; }
  .close { background: #c75050; }

  .tabs { display: flex; gap: 6px; height: 24px; flex: none; padding: 2px 5px 0 48px; align-items: stretch; border-bottom: 1px solid #8db2e3; }
  .tabs > button { padding: 0 11px; height: 22px; }
  .tabs > .on { background: linear-gradient(#fff, #e8f1fb); border: 1px solid #8db2e3; border-bottom: 0; border-radius: 3px 3px 0 0; padding: 0 10px; box-shadow: 0 0 2px #fff; }
  .docctl { margin-left: auto; display: flex; gap: 12px; align-items: center; }
  .q { font: bold 10px "Liberation Sans", sans-serif; fill: #fff; }

  .ribbon { display: flex; gap: 4px; height: 90px; flex: none; padding: 2px 3px 3px; background: linear-gradient(#e3ecf7 0, #d2e0f1 20%, #c7d9ee 21%, #e2f2fb 100%); border: 1px solid #9dc2ea; border-bottom: 2px solid #a5e4f2; border-radius: 4px; }
  .grp { display: flex; flex-direction: column; height: 84px; border: 1px solid #a9c5e4; border-radius: 3px; background: linear-gradient(#dde8f5 0, #d3e0f1 18%, #c8d9ee 19%, #dbe8f6 100%); overflow: hidden; flex: none; box-shadow: inset 1px 1px #edf4fb; }
  .body { display: flex; flex: 1; padding: 0 3px; }
  .grp footer { display: flex; position: relative; height: 16px; flex: none; justify-content: center; line-height: 16px; color: #3e6aaa; background: #c1d9f1; padding-right: 18px; }
  .styles footer, .cells footer, .edit footer { padding-right: 0; }
  .launch { position: absolute; right: 4px; top: 3px; }
  .clip { width: 150px; } .font { width: 194px; } .align { width: 251px; } .num { width: 134px; } .styles { width: 173px; } .cells { width: 134px; } .edit { width: 175px; }
  .col { display: flex; flex-direction: column; padding: 0; }
  .sm { height: 22px; gap: 3px; justify-content: flex-start; }
  .edit .col { width: 81px; padding-left: 3px; }
  .edit .col .sm { gap: 4px; }
  .sum { font: bold 13px "DejaVu Serif", serif; fill: #000; }
  .az { font: bold 15px "Liberation Serif", serif; }
  .fc { font: bold 14px "Liberation Serif", serif; fill: #38538f; }
  .ma { font: bold 9px "Liberation Serif", serif; fill: #000; }
  .ori { font: bold 11px "Liberation Serif", serif; fill: #222; }
  .stack { display: flex; flex-direction: column; gap: 7px; padding-top: 8px; }
  .align .stack { padding-left: 1px; }
  .font .stack, .num .stack { padding-left: 3px; }
  .row { display: flex; height: 22px; }
  .push { margin-left: auto; }
  .align .push { margin-left: 4px; }
  .set { display: flex; height: 22px; border: 1px solid #9ab9dd; border-radius: 2px; background: linear-gradient(#dce8f6, #c6d8ef 48%, #bccfe9 50%, #d1e0f3); }
  .set button + button { border-left: 1px solid #b6cde8; }
  .set button { gap: 3px; }
  .b22 { width: 22px; } .b34 { width: 34px; } .b32 { width: 32px; }
  .set .hot { background: linear-gradient(#fcd9a3, #fdb55b 45%, #ffcf74 60%, #ffe690); }
  .pick { position: relative; display: flex; align-items: center; height: 22px; border: 1px solid #b3c7e1; background: #eaf2fb; color: #000; margin-right: 1px; }
  .pick select { appearance: none; width: 100%; height: 100%; padding-left: 3px; }
  .pick .arr { position: absolute; right: 4px; }
  .w97 { width: 97px; } .w42 { width: 42px; } .full { width: 100%; margin: 0; }
  .ser { font-family: "Liberation Serif", serif; line-height: 16px; color: #222; }
  .s20 { font-size: 20px; } .s16 { font-size: 16px; } .s12 { font-size: 12px; } .s14 { font-size: 14px; }
  .b22 svg[width="5"] { align-self: flex-start; margin-top: 3px; margin-left: -2px; }
  .up { line-height: 8px; padding-bottom: 6px; }
  .pc { color: #222; font-size: 12px; }
  .dec { font: bold 8px "Liberation Sans", sans-serif; fill: #333; }
  .wrap { border-left: 1px solid #b7cbe2; margin: 5px 0 6px 3px; }
  .align .wrap { padding: 3px 0 0 6px; }
  .wrap .arr { margin-left: 1px; }

  .big { flex-direction: column; justify-content: flex-start; padding-top: 4px; line-height: 13px; }
  .big > svg:first-child { height: 34px; }
  .big > .arr { margin-top: 5px; }
  .big .arr { display: inline-block; vertical-align: middle; }
  .big > span { text-align: center; }
  .paste { width: 46px; }
  .g70 { width: 72px; } .g53 { width: 51px; } .g44 { width: 44px; } .g42 { width: 42px; }

  .message { display: flex; flex: none; height: 44px; padding: 6px 5px 6px 2px; background: #c4daf8; border-top: 1px solid #a9bfde; }
  .msg { flex: 1; display: flex; align-items: center; height: 32px; border: 1px solid #a3bddb; background: linear-gradient(#fff, #e3f2fd); padding-left: 3px; }
  .msg strong { margin: 0 11px 0 11px; font-weight: 600; }
  .msg button { margin-left: 12px; width: 88px; height: 23px; border: 1px solid #a3bddb; background: #fff; }
  .x { margin-left: 7px; align-self: flex-start; padding-top: 3px; }

  .fbar { display: flex; flex: none; height: 22px; border-top: 1px solid #6a90bb; border-bottom: 1px solid #6a90bb; background: #fff; color: #000; border-left: 1px solid #6a90bb; font-size: 13px; }
  .name { display: flex; align-items: center; width: 158px; padding-right: 6px; }
  .name input { flex: 1; min-width: 0; text-align: center; padding-right: 6px; }
  .fx { display: flex; align-items: center; justify-content: space-between; width: 85px; padding: 0 7px 0 5px; border: 1px solid #7ca0cc; border-width: 0 1px 0 1px; border-radius: 10px 0 0 10px; background: linear-gradient(#eef4fc, #b5cbea); }
  .dot { width: 9px; height: 9px; border-radius: 5px; background: radial-gradient(#fff, #9db4d4); }
  .fx button { font: bold italic 14px/16px "Liberation Serif", serif; color: #444; }
  .fx small { font-size: 11px; align-self: flex-end; line-height: 12px; }
  .formula { flex: 1; padding-left: 7px; }
  .exp { width: 16px; border: 1px solid #7ca0cc; background: linear-gradient(#eef4fc, #b5cbea); }

  main { display: flex; flex: 1; min-height: 0; margin-top: 3px; border-top: 1px solid #6a90bb; }
  .sheet { flex: 1; min-width: 0; overflow: hidden; background: #fff; color: #000; }
  table { width: 100%; table-layout: fixed; border-collapse: separate; border-spacing: 0; }
  th, td { padding: 0; white-space: nowrap; text-align: center; border: 1px solid #ccd5e3; border-width: 0 1px 1px 0; }
  thead th { height: 14px; font: 12px/13px "Liberation Serif", serif; color: #27414f; background: linear-gradient(#f4f7fb, #d5dfeb); border-color: #9eb6ce; }
  thead .corner { background: #a9c4e9; }
  .corner svg { margin: 4px 0 0 12px; }
  thead .sel { background: linear-gradient(#f8d493, #f1bb54); border-color: #f29536; }
  .rh { font: 12px/15px "Liberation Serif", serif; color: #27414f; background: #e4ecf7; border-color: #9eb6ce; vertical-align: bottom; }
  .rh.sel { background: #ffd58d; border-color: #f29536; }
  tbody tr { height: 16px; }
  tbody tr td { height: 16px; line-height: 13px; padding-top: 2px; }
  tbody tr th { height: 16px; line-height: 15px; }
  tbody .h1 td, tbody .h1 th { height: 41px; }
  tbody .h2 td, tbody .h2 th { height: 41px; }
  .h1 td, .h2 td { font-size: 11px; font-weight: 700; }
  tbody .h1 .k, tbody .h2 td { font-family: Lato, "Open Sans", sans-serif; line-height: 16px; padding-top: 0; }
  .k { border-right-color: #000; }
  .d { border-bottom: 0; padding-bottom: 1px; background: repeating-linear-gradient(90deg, #000 0 3px, transparent 3px 4px) bottom / 100% 1px no-repeat; }
  .gray { background-color: #a5a5a5; }
  .n { font-size: 12px; }
  .last { text-align: left; padding-left: 14px; border-right: 0; overflow: hidden; }
  .work { text-align: left; padding-left: 3px; color: #0000f0; font-weight: 700; font-size: 11px; }
  .thin { font: 700 10px/13px "Liberation Sans", sans-serif; padding-left: 2px; }
  .ar { font: 700 11px/13px "Liberation Sans", sans-serif; color: #0000f0; }
  .l { text-align: left; padding-left: 2px; }
  .r { text-align: right; padding-right: 2px; }
  .lt { color: #0563c8; }
  .red { color: #f00; }
  .flag { background-image: linear-gradient(135deg, #008000 0 4px, transparent 4px); background-repeat: no-repeat; }
  .flag.d { background-image: linear-gradient(135deg, #008000 0 4px, transparent 4px), repeating-linear-gradient(90deg, #000 0 3px, transparent 3px 4px); background-size: 100% 100%, 100% 1px; background-position: top left, bottom; }
  tbody .h1 .active { position: relative; outline: 2px solid #000; outline-offset: -2px; font: 11px/16px "Open Sans", sans-serif; border-bottom: 0; }
  .knob { position: absolute; right: -2px; bottom: -2px; width: 5px; height: 5px; background: #000; border: 1px solid #fff; }

  .vscroll { display: flex; flex-direction: column; align-items: center; width: 15px; flex: none; background: linear-gradient(90deg, #9bb8dc, #7395c4); padding: 2px 0 3px; }
  .split { width: 13px; height: 6px; flex: none; border: 1px solid #6a90bb; background: #fff; margin-bottom: 8px; }
  .thumb { width: 14px; height: 46px; flex: none; margin-top: 5px; border: 1px solid #6a86ad; border-radius: 2px; background: linear-gradient(#70809a, #70809a) center 17px / 8px 1px no-repeat, linear-gradient(#70809a, #70809a) center 20px / 8px 1px no-repeat, linear-gradient(#70809a, #70809a) center 23px / 8px 1px no-repeat, linear-gradient(90deg, #f5f8fc, #c6d2e3); }
  .vscroll .end { margin-top: auto; }

  .sheets { display: flex; flex: none; height: 17px; background: linear-gradient(#e8f1fc, #b8d2f3); border-top: 1px solid #8aa9cf; border-bottom: 1px solid #6a90bb; font-size: 12px; }
  .nav { display: flex; align-items: center; gap: 7px; width: 64px; padding-left: 5px; flex: none; border-right: 1px solid #7ca0cc; background: #c3d9f5; }
  .strip { display: flex; flex: 1; min-width: 0; overflow: hidden; padding-left: 10px; }
  .strip button { line-height: 15px; }
  .strip .on { font-weight: 700; font-size: 13px; background: #fff; }
  .slash { margin: 0 2px 0 3px; }
  .hscroll { display: flex; align-items: center; width: 93px; flex: none; padding: 0 0 0 2px; background: #7f9fcb; gap: 8px; }
  .grip { width: 6px; height: 13px; border: 1px solid #7ca0cc; background: #fff; }
  .hscroll .grip:last-child { margin-right: 16px; }
  .hthumb { width: 11px; height: 14px; border: 1px solid #8493ab; background: repeating-linear-gradient(90deg, #7d8aa0 0 1px, #e8edf5 1px 3px) center / 8px 7px no-repeat, #e8edf5; }
  .hscroll .end { margin-left: auto; }

  .status { display: flex; flex: none; height: 21px; color: #1e3a6b; background: linear-gradient(#d7e6f9, #c7dcf8 30%, #b1cff5 38%, #d5e5fa 100%); }
  .ready { width: 47px; padding-left: 7px; line-height: 20px; border-right: 1px solid #8db2e3; }
  .views { display: flex; align-items: center; margin-left: auto; padding: 0 5px 0 6px; background: linear-gradient(#a9c6ec, #7fa6da 45%, #6f99d2 50%, #a3c3ed); border-left: 1px solid #567db1; }
  .modes { display: flex; border: 1px solid #6f94c8; background: #a8c4ea; }
  .modes button { width: 18px; height: 16px; }
  .modes .hot { background: #ffd27a; }
  .pct { margin: 0 14px 0 9px; }
  .views input { appearance: none; width: 102px; height: 16px; background: linear-gradient(#eaf2fc, #eaf2fc) 51px center / 1px 8px no-repeat, linear-gradient(#dfe9f7, #dfe9f7) center / 100% 1px no-repeat; }
  .views input::-webkit-slider-thumb { appearance: none; width: 9px; height: 12px; border: 1px solid #48617f; border-radius: 1px 1px 5px 5px; background: #eef4fc; }

  .task { display: flex; align-items: stretch; flex: none; height: 40px; padding-left: 15px; background: linear-gradient(90deg, #5f7680, #587580 60%, #557480); color: #fff; }
  .plain { width: 62px; }
  .app { width: 59px; margin: 1px 4px 1px 0; border: 1px solid #9cabb2; background: #728890; }
  .two { width: 54px; margin-right: 8px; box-shadow: 2px 0 #5f7680, 3px 0 #9cabb2, 5px 0 #72888f; }
  .app:nth-child(2) { margin-left: 1px; }
  .lit { background: #a3b2b7; border-color: #fff; box-shadow: 2px 0 #5f7680, 3px 0 #e8eef0, 5px 0 #8c9ea5; }
  .tray { display: flex; align-items: center; margin-left: auto; gap: 9px; padding-right: 26px; }
  .tray svg:first-child { margin-right: 5px; }
  .tray span { margin: 0 8px 0 6px; }
  time { text-align: center; line-height: 17px; white-space: nowrap; }
</style>
